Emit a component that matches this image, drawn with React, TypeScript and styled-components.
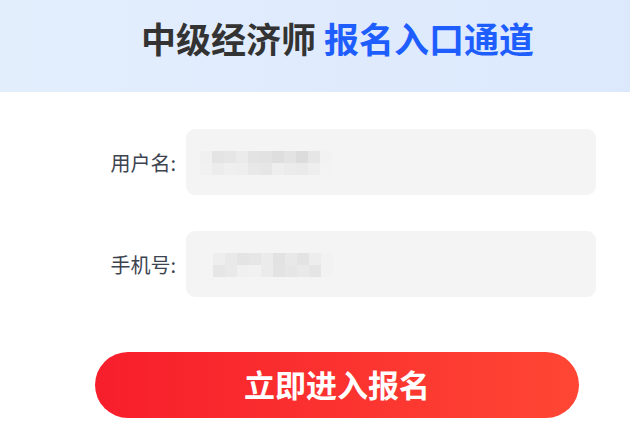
import React from "react";
import styled, { createGlobalStyle } from "styled-components";

const GlobalStyle = createGlobalStyle`
  html, body {
    margin: 0;
    padding: 0;
    background: #fff;
    overflow: hidden;
  }
  body {
    font-family: "Noto Sans CJK SC", "Noto Sans", sans-serif;
  }
`;

const Page = styled.div`
  width: 630px;
  height: 427px;
  overflow: hidden;
`;

const Header = styled.header`
  height: 92px;
  background: linear-gradient(90deg, #e3eefd 0%, #dce9fd 100%);
  display: flex;
  align-items: center;
`;

const Title = styled.h1`
  width: 675px;
  flex: 0 0 675px;
  margin: 0;
  padding-bottom: 18px;
  text-align: center;
  font-size: 35px;
  font-weight: 700;
  color: #333333;
  white-space: nowrap;
  span {
    color: #1e5eff;
  }
`;

const Form = styled.div`
  padding-top: 37px;
  display: flex;
  flex-direction: column;
  gap: 36px;
`;

const Row = styled.div`
  display: flex;
  align-items: center;
  padding-left: 90px;
`;

const Label = styled.label`
  width: 86px;
  margin-right: 10px;
  text-align: right;
  font-size: 20px;
  font-weight: 400;
  color: #3d4450;
`;

const Field = styled.div`
  width: 410px;
  height: 66px;
  border-radius: 9px;
  background: #f4f4f4;
  display: flex;
  align-items: center;
`;

const Mosaic = styled.div<{ $offset: number; $cols: number }>`
  margin-left: ${({ $offset }) => $offset}px;
  display: grid;
  grid-template-columns: repeat(${({ $cols }) => $cols}, 12px);
  grid-auto-rows: 12px;
  margin-top: 2px;
`;

const Cell = styled.span<{ $shade: string }>`
  background: ${({ $shade }) => $shade};
`;

const SubmitButton = styled.button`
  margin: 55px 0 0 95px;
  width: 484px;
  height: 66px;
  border: none;
  border-radius: 33px;
  background: linear-gradient(90deg, #f71e2b 0%, #ff4634 100%);
  color: #fff;
  font-family: "Noto Sans CJK SC", "Noto Sans", sans-serif;
  font-size: 31px;
  font-weight: 700;
  cursor: pointer;
  display: flex;
  align-items: center;
  justify-content: center;
  padding-bottom: 4px;
`;

const userShades = [
  "#f0f0f0", "#e4e4e4", "#e6e6e6", "#ebebeb", "#e3e3e3", "#e2e2e2", "#dedede", "#e3e3e3", "#dcdcdc", "#e6e6e6", "#f2f2f2",
  "#f1f1f1", "#ececec", "#efefef", "#eeeeee", "#e8e8e8", "#e6e6e6", "#eeeeee", "#ebebeb", "#eaeaea", "#eeeeee", "#f3f3f3",
];

const phoneShades = [
  "#eeeeee", "#e9e9e9", "#e4e4e4", "#e6e6e6", "#ebebeb", "#e2e2e2", "#e8e8e8", "#e3e3e3", "#ededed", "#f2f2f2",
  "#e6e6e6", "#e9e9e9", "#f0f0f0", "#f1f1f1", "#ebebeb", "#e3e3e3", "#e6e6e6", "#e9e9e9", "#e5e5e5", "#f2f2f2",
];

const App = () => {
  return (
    <Page>
      <GlobalStyle />
      <Header>
        <Title>
          中级经济师 <span>报名入口通道</span>
        </Title>
      </Header>
      <Form>
        <Row>
          <Label>用户名:</Label>
          <Field>
            <Mosaic $offset={14} $cols={11}>
              {userShades.map((shade, idx) => (
                <Cell key={idx} $shade={shade} />
              ))}
            </Mosaic>
          </Field>
        </Row>
        <Row>
          <Label>手机号:</Label>
          <Field>
            <Mosaic $offset={27} $cols={10}>
              {phoneShades.map((shade, idx) => (
                <Cell key={idx} $shade={shade} />
              ))}
            </Mosaic>
          </Field>
        </Row>
      </Form>
      <SubmitButton>立即进入报名</SubmitButton>
    </Page>
  );
};

export default App;
